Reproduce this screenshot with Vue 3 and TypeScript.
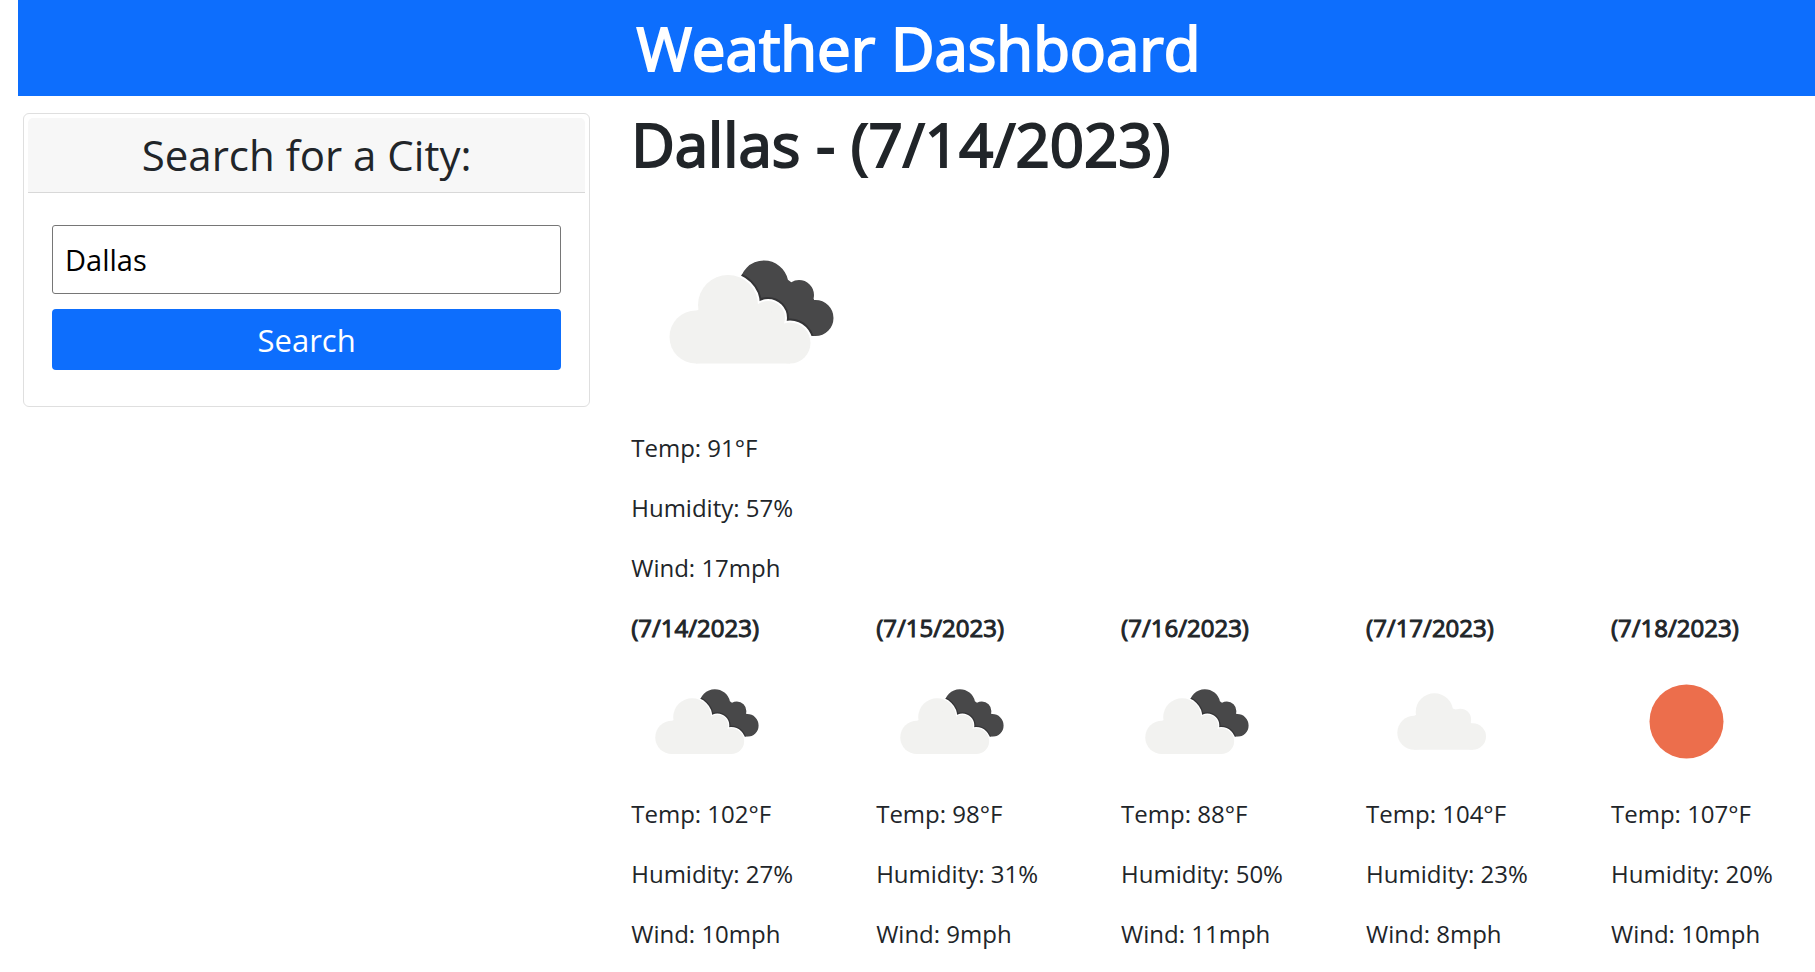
<script setup lang="ts">
import { ref } from 'vue'

type Icon = 'clouds' | 'cloud' | 'sun'

interface Reading {
  date: string
  icon: Icon
  temp: number
  humidity: number
  wind: number
}

const city = ref('Dallas')

const current: Reading & { city: string } = {
  city: 'Dallas',
  date: '7/14/2023',
  icon: 'clouds',
  temp: 91,
  humidity: 57,
  wind: 17,
}

const forecast: Reading[] = [
  { date: '7/14/2023', icon: 'clouds', temp: 102, humidity: 27, wind: 10 },
  { date: '7/15/2023', icon: 'clouds', temp: 98, humidity: 31, wind: 9 },
  { date: '7/16/2023', icon: 'clouds', temp: 88, humidity: 50, wind: 11 },
  { date: '7/17/2023', icon: 'cloud', temp: 104, humidity: 23, wind: 8 },
  { date: '7/18/2023', icon: 'sun', temp: 107, humidity: 20, wind: 10 },
]
</script>

<template>
  <div class="page">
    <svg class="sprite" aria-hidden="true">
      <defs>
        <clipPath id="dark-cloud">
          <circle cx="133" cy="92" r="24.5" />
          <circle cx="168" cy="102" r="15" />
          <circle cx="184.5" cy="125" r="18" />
          <path d="M112 92L156 86L183 106L180 143L130 130Z" />
        </clipPath>
        <g id="light-cloud">
          <circle cx="65" cy="144" r="26.5" />
          <circle cx="97" cy="112" r="30" />
          <circle cx="137" cy="125" r="17" />
          <circle cx="159" cy="150" r="20.5" />
          <path d="M65 118L97 100L137 115L159 140V170.5H65Z" />
        </g>
      </defs>
      <symbol id="clouds" viewBox="0 -1 238 238">
        <g clip-path="url(#dark-cloud)">
          <rect width="238" height="238" fill="#484849" />
          <use href="#light-cloud" fill="#343436" stroke="#343436" stroke-width="8" />
        </g>
        <use href="#light-cloud" fill="#fff" stroke="#fff" stroke-width="4" />
        <use href="#light-cloud" fill="#f2f2f0" />
      </symbol>
      <symbol id="cloud" viewBox="0 -1 150 150">
        <g fill="#f2f2f0">
          <circle cx="48.3" cy="85.7" r="17" />
          <circle cx="68.4" cy="65" r="18.7" />
          <circle cx="94.3" cy="72.5" r="10.8" />
          <circle cx="106.8" cy="89.5" r="13.2" />
          <path d="M48.3 69L68 55L94 64L106.8 78V102.7H48.3Z" />
        </g>
      </symbol>
      <symbol id="sun" viewBox="0 -1 150 150">
        <circle cx="75.5" cy="74.5" r="37" fill="#ec6e4c" />
      </symbol>
    </svg>

    <header class="banner">
      <h1>Weather Dashboard</h1>
    </header>

    <main class="layout">
      <form class="card" @submit.prevent>
        <label class="card-header" for="city">Search for a City:</label>
        <div class="card-body">
          <input id="city" v-model="city" type="text" />
          <button type="submit">Search</button>
        </div>
      </form>

      <div class="weather">
        <section class="current">
          <h2>{{ current.city }} - ({{ current.date }})</h2>
          <svg class="icon-large" role="img" aria-label="Current conditions"><use :href="'#' + current.icon" /></svg>
          <p>Temp: {{ current.temp }}°F</p>
          <p>Humidity: {{ current.humidity }}%</p>
          <p>Wind: {{ current.wind }}mph</p>
        </section>

        <section class="forecast">
          <article v-for="day in forecast" :key="day.date">
            <h3>({{ day.date }})</h3>
            <svg class="icon-small" role="img" aria-label="Forecast conditions"><use :href="'#' + day.icon" /></svg>
            <p>Temp: {{ day.temp }}°F</p>
            <p>Humidity: {{ day.humidity }}%</p>
            <p>Wind: {{ day.wind }}mph</p>
          </article>
        </section>
      </div>
    </main>
  </div>
</template>

<style>
body {
  margin: 0;
  background: #fff;
}
</style>

<style scoped>
.page {
  font-family: "Open Sans", "Noto Sans", sans-serif;
  font-size: 24px;
  line-height: 36px;
  color: #212529;
}

.page *,
.page *::before {
  box-sizing: border-box;
}

.sprite {
  position: absolute;
  width: 0;
  height: 0;
}

h1,
h2,
h3,
p {
  margin: 0;
}

h1,
h2 {
  font-size: 60px;
  line-height: 72px;
  font-weight: 400;
  -webkit-text-stroke: 2px currentColor;
}

.banner {
  margin-left: 18px;
  padding: 12px 8px 12px 12px;
  background: #0d6efd;
  color: #fff;
  text-align: center;
}

.layout {
  display: grid;
  grid-template-columns: minmax(0, 23fr) minmax(0, 48fr);
  column-gap: 41px;
  align-items: start;
  padding-left: 23px;
}

.card {
  margin-top: 17px;
  padding: 4px;
  border: 1px solid #dfdfdf;
  border-radius: 6px;
}

.card-header {
  display: block;
  padding: 12px 24px;
  border-bottom: 1px solid #d8d8d8;
  border-radius: 5px 5px 0 0;
  background: #f7f7f7;
  font-size: 42px;
  line-height: 50px;
  text-align: center;
}

.card-body {
  display: flex;
  flex-direction: column;
  gap: 15px;
  padding: 32px 24px;
}

input {
  width: 100%;
  height: 69px;
  padding: 0 12px;
  border: 1px solid #767676;
  border-radius: 3px;
  background: #fff;
  color: #000;
  font-family: inherit;
  font-size: 29px;
}

button {
  height: 61px;
  border: 0;
  border-radius: 4px;
  background: #0d6efd;
  color: #fff;
  font-family: inherit;
  font-size: 31px;
}

.weather {
  padding-top: 12px;
}

h2 {
  margin-bottom: 12px;
}

.icon-large,
.icon-small {
  display: block;
}

.icon-large {
  width: 238px;
  height: 238px;
}

.icon-small {
  width: 150px;
  height: 150px;
}

p + p {
  margin-top: 24px;
}

.forecast {
  display: grid;
  grid-template-columns: repeat(4, minmax(0, 1fr)) 204px;
  margin-top: 24px;
}

h3 {
  font-size: 24px;
  line-height: 36px;
  font-weight: 400;
  -webkit-text-stroke: 1px currentColor;
}
</style>
